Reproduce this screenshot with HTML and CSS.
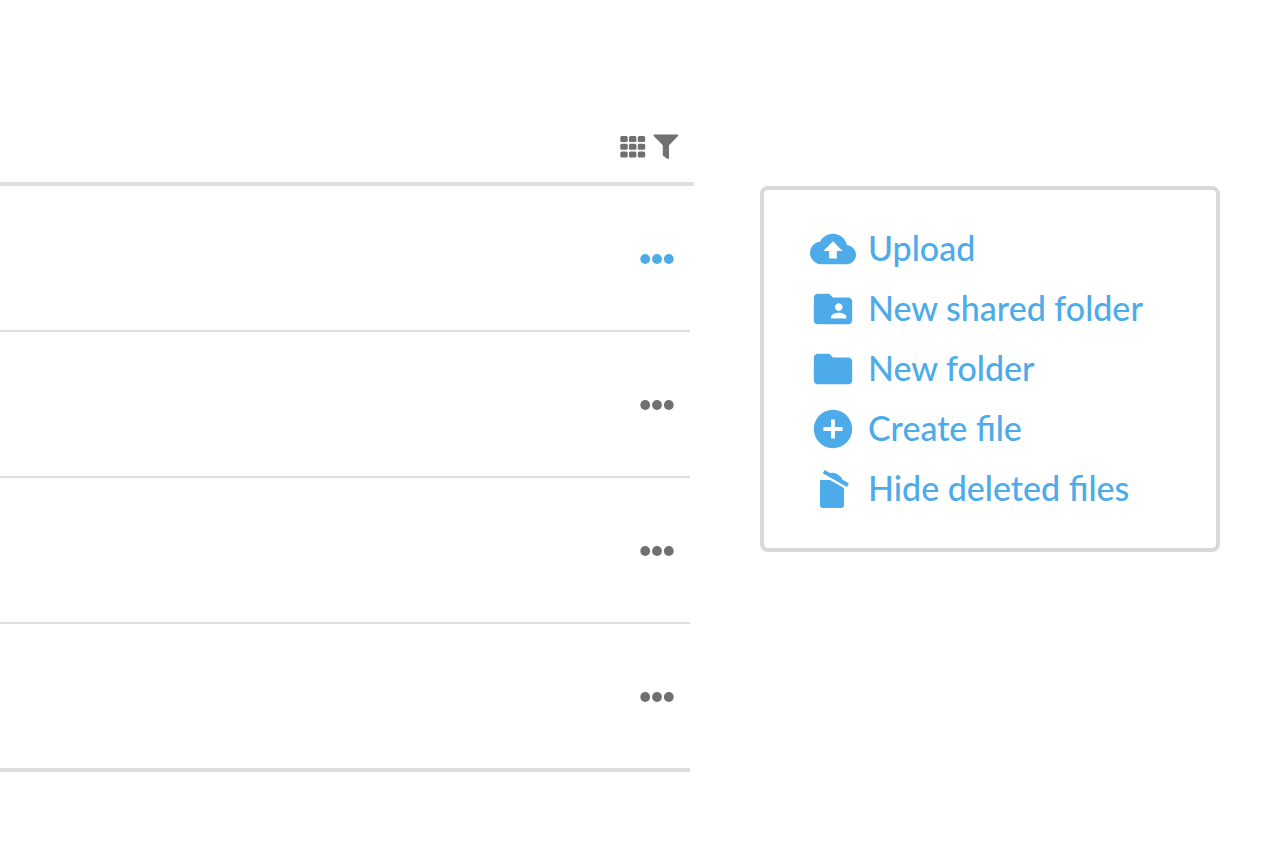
FILE: index.html
```html
<!DOCTYPE html>
<html lang="en">

<head>
    <meta charset="UTF-8">
    <meta name="viewport" content="width=device-width, initial-scale=1.0">
    <title>Files</title>
    <link rel="stylesheet" href="styles.css">
</head>

<body>
    <div class="page">
        <main class="files">
            <!-- View switch and filter -->
            <div class="toolbar">
                <button type="button" class="icon-button" aria-label="Grid view">
                    <svg width="26" height="26" viewBox="0 0 26 26">
                        <rect x="0.3" y="2" width="7.4" height="6" rx="1.5" />
                        <rect x="9" y="2" width="7.4" height="6" rx="1.5" />
                        <rect x="17.8" y="2" width="7.4" height="6" rx="1.5" />
                        <rect x="0.3" y="9.8" width="7.4" height="6" rx="1.5" />
                        <rect x="9" y="9.8" width="7.4" height="6" rx="1.5" />
                        <rect x="17.8" y="9.8" width="7.4" height="6" rx="1.5" />
                        <rect x="0.3" y="17.5" width="7.4" height="6" rx="1.5" />
                        <rect x="9" y="17.5" width="7.4" height="6" rx="1.5" />
                        <rect x="17.8" y="17.5" width="7.4" height="6" rx="1.5" />
                    </svg>
                </button>
                <button type="button" class="icon-button" aria-label="Filter">
                    <svg width="26" height="26" viewBox="0 0 26 26">
                        <path d="M1.4 0.5H24.2Q26 0.8 24.8 2.3L16 11.2V24Q15.6 25.6 14.2 24.8L9.8 21.6V11.2L1 2.3Q-0.4 0.9 1.4 0.5Z" />
                    </svg>
                </button>
            </div>

            <ul class="rows">
                <li class="row">
                    <button type="button" class="more active" aria-label="More options">
                        <svg width="34" height="10" viewBox="0 0 34 10">
                            <circle cx="5.2" cy="5" r="4.9" /><circle cx="17" cy="5" r="4.9" /><circle cx="28.8" cy="5" r="4.9" />
                        </svg>
                    </button>
                </li>
                <li class="row">
                    <button type="button" class="more" aria-label="More options">
                        <svg width="34" height="10" viewBox="0 0 34 10">
                            <circle cx="5.2" cy="5" r="4.9" /><circle cx="17" cy="5" r="4.9" /><circle cx="28.8" cy="5" r="4.9" />
                        </svg>
                    </button>
                </li>
                <li class="row">
                    <button type="button" class="more" aria-label="More options">
                        <svg width="34" height="10" viewBox="0 0 34 10">
                            <circle cx="5.2" cy="5" r="4.9" /><circle cx="17" cy="5" r="4.9" /><circle cx="28.8" cy="5" r="4.9" />
                        </svg>
                    </button>
                </li>
                <li class="row">
                    <button type="button" class="more" aria-label="More options">
                        <svg width="34" height="10" viewBox="0 0 34 10">
                            <circle cx="5.2" cy="5" r="4.9" /><circle cx="17" cy="5" r="4.9" /><circle cx="28.8" cy="5" r="4.9" />
                        </svg>
                    </button>
                </li>
            </ul>
        </main>

        <!-- Folder actions -->
        <aside class="actions">
            <button type="button" class="action">
                <svg width="46" height="46" viewBox="0 0 24 24">
                    <path d="M19.35 10.04C18.67 6.59 15.64 4 12 4 9.11 4 6.6 5.64 5.35 8.04 2.34 8.36 0 10.91 0 14c0 3.31 2.69 6 6 6h13c2.76 0 5-2.24 5-5 0-2.64-2.05-4.78-4.65-4.96zM14 13v4h-4v-4H7l5-5 5 5h-3z" />
                </svg>
                <span class="label">Upload</span>
            </button>
            <button type="button" class="action">
                <svg width="46" height="46" viewBox="0 0 24 24">
                    <path d="M20 6h-8l-2-2H4c-1.1 0-1.99.9-1.99 2L2 18c0 1.1.9 2 2 2h16c1.1 0 2-.9 2-2V8c0-1.1-.9-2-2-2zm-5 3c1.1 0 2 .9 2 2s-.9 2-2 2-2-.9-2-2 .9-2 2-2zm4 8h-8v-1c0-1.33 2.67-2 4-2s4 .67 4 2v1z" />
                </svg>
                <span class="label">New shared folder</span>
            </button>
            <button type="button" class="action">
                <svg width="46" height="46" viewBox="0 0 24 24">
                    <path d="M10 4H4c-1.1 0-1.99.9-1.99 2L2 18c0 1.1.9 2 2 2h16c1.1 0 2-.9 2-2V8c0-1.1-.9-2-2-2h-8l-2-2z" />
                </svg>
                <span class="label">New folder</span>
            </button>
            <button type="button" class="action">
                <svg width="46" height="46" viewBox="0 0 24 24">
                    <path d="M12 2C6.48 2 2 6.48 2 12s4.48 10 10 10 10-4.48 10-10S17.52 2 12 2zm5 11h-4v4h-2v-4H7v-2h4V7h2v4h4v2z" />
                </svg>
                <span class="label">Create file</span>
            </button>
            <button type="button" class="action">
                <svg width="46" height="46" viewBox="0 0 46 46">
                    <path d="M10 14H20L34 22V39Q34 42 31 42H13Q10 42 10 39Z" />
                    <path d="M14.6 4L20 7Q24.5 5.8 28 8.8Q31.5 10.5 32.5 13.8L38.8 17.3L37 21L12.7 7.2Z" />
                </svg>
                <span class="label">Hide deleted files</span>
            </button>
        </aside>
    </div>
</body>

</html>
```
FILE: styles.css
```css
* {
    box-sizing: border-box;
}

body {
    margin: 0;
    font-family: Lato, sans-serif;
    background-color: #fff;
    color: #707070;
}

button {
    padding: 0;
    border: 0;
    background: none;
    color: inherit;
    font: inherit;
    cursor: pointer;
}

svg {
    display: block;
    flex: none;
    fill: currentColor;
}

.page {
    display: flex;
    align-items: flex-start;
    gap: 66px;
    padding-right: 46px;
}

.files {
    flex: 1;
}

.toolbar {
    display: flex;
    justify-content: flex-end;
    gap: 7px;
    padding: 134px 15px 22px 0;
    border-bottom: 4px solid #dcdcdc;
}

.rows {
    margin: 0 4px 0 0;
    padding: 0;
    list-style: none;
}

.row {
    display: flex;
    align-items: center;
    justify-content: flex-end;
    min-height: 146px;
    padding: 2px 16px 0 0;
    border-bottom: 2px solid #dcdcdc;
}

.row:last-child {
    min-height: 148px;
    border-bottom-width: 4px;
}

.active,
.action {
    color: #4dabe9;
}

.actions {
    flex: 0 0 460px;
    margin-top: 186px;
    padding: 29px 46px;
    border: 4px solid #d9d9d9;
    border-radius: 8px;
}

.action {
    display: flex;
    align-items: center;
    gap: 12px;
    width: 100%;
    height: 60px;
    font-size: 34px;
    font-weight: 500;
    line-height: 42px;
    text-align: left;
    white-space: nowrap;
}

.label {
    padding-bottom: 2px;
}
```
